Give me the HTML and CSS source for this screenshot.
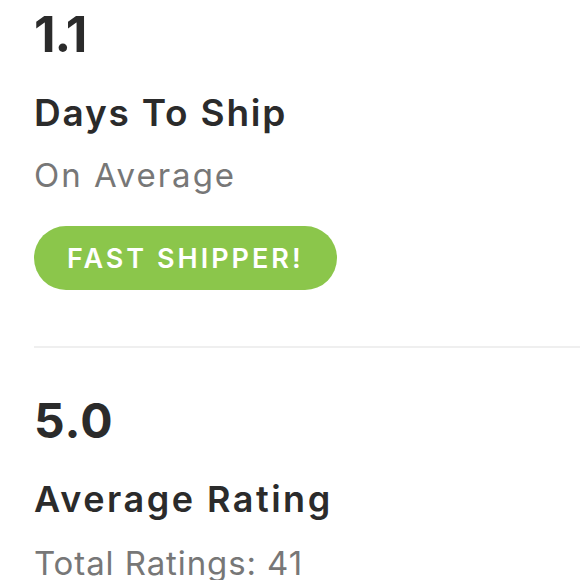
FILE: index.html
```html
<!DOCTYPE html>
<html>
<head>
<meta charset="utf-8">
<link rel="stylesheet" href="styles.css">
</head>
<body>
<div class="page">
  <section class="stat">
    <div class="value">1.1</div>
    <div class="title">Days To Ship</div>
    <div class="sub">On Average</div>
    <div class="badge">FAST SHIPPER!</div>
  </section>
  <hr class="divider">
  <section class="stat stat-second">
    <div class="value">5.0</div>
    <div class="title">Average Rating</div>
    <div class="sub">Total Ratings: 41</div>
  </section>
</div>
</body>
</html>
```
FILE: styles.css
```css
html, body {
  margin: 0;
  padding: 0;
  background: #ffffff;
}
body {
  font-family: Inter, "Liberation Sans", sans-serif;
  color: #2b2b2b;
  overflow: hidden;
}
.page {
  padding-left: 34px;
  padding-top: 9px;
}
.stat {
  display: flex;
  flex-direction: column;
  align-items: flex-start;
}
.value {
  font-size: 50px;
  line-height: 50px;
  font-weight: 700;
  letter-spacing: -1px;
}
.title {
  font-size: 37px;
  line-height: 40px;
  font-weight: 600;
  margin-top: 34px;
  letter-spacing: 1.8px;
}
.sub {
  font-size: 33px;
  line-height: 36px;
  font-weight: 400;
  color: #777777;
  margin-top: 24px;
  letter-spacing: 2px;
}
.badge {
  margin-top: 33px;
  height: 64px;
  padding: 0 33px;
  border-radius: 32px;
  background: #8bc64b;
  color: #ffffff;
  font-size: 27px;
  font-weight: 600;
  display: flex;
  align-items: center;
  letter-spacing: 3px;
}
.divider {
  margin: 56px 0 0 0;
  border: 0;
  height: 2px;
  background: #efefef;
}
.stat-second .value {
  font-size: 48px;
  margin-top: 48px;
  letter-spacing: 1px;
}
.stat-second .title {
  font-size: 36px;
  margin-top: 33px;
  letter-spacing: 2.5px;
}
.stat-second .sub {
  margin-top: 26px;
  letter-spacing: 0.9px;
}
```
